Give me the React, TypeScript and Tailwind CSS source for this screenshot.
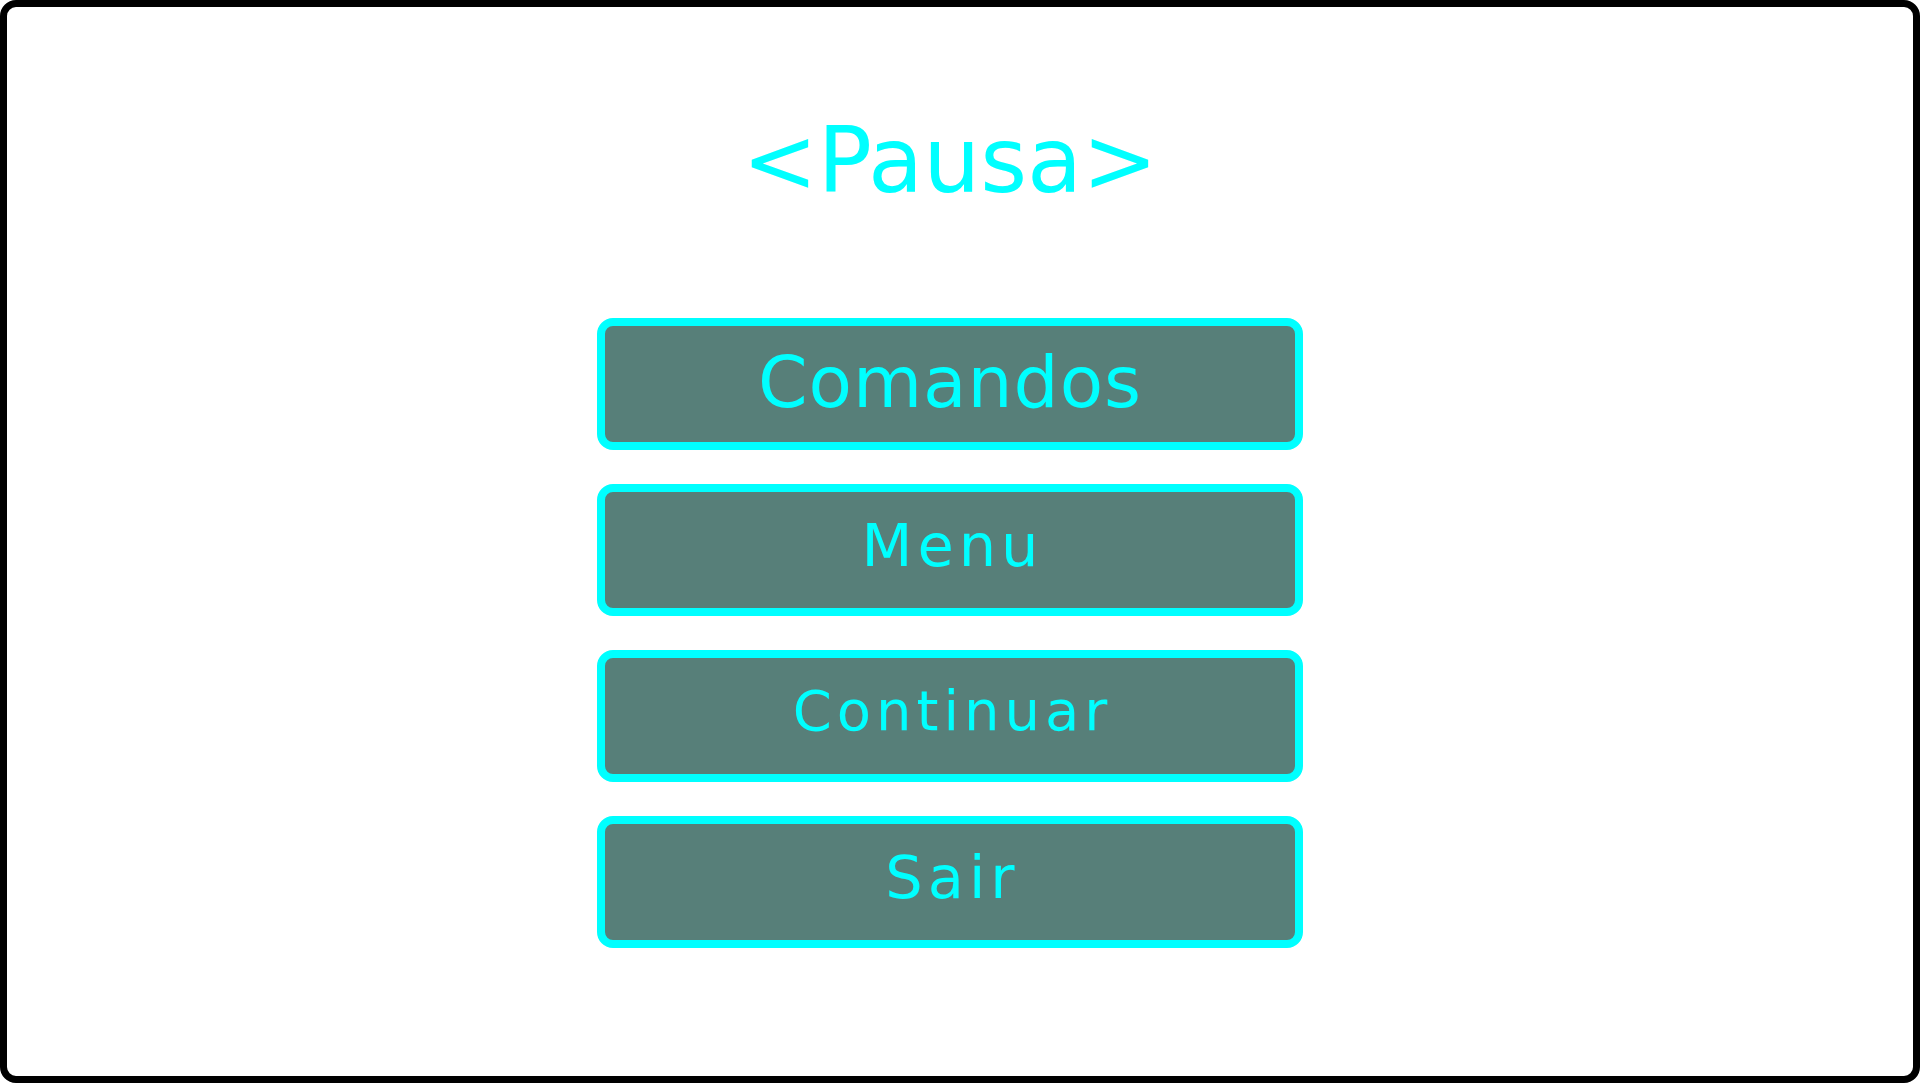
const buttons = [
  { label: "Comandos", cls: "text-[71px] tracking-[1px] pb-[4px]" },
  { label: "Menu", cls: "text-[59px] tracking-[5px] pb-[9px] pl-[5px]" },
  { label: "Continuar", cls: "text-[56px] tracking-[5px] pb-[11px] pl-[5px]" },
  { label: "Sair", cls: "text-[59px] tracking-[5px] pb-[10px] pl-[5px]" },
];

const PauseButton = ({ label, cls }: { label: string; cls: string }) => (
  <button
    className={`box-border flex h-[132px] w-[706px] shrink-0 cursor-pointer items-center justify-center rounded-[16px] border-[8px] border-[#00ffff] bg-[#577f79] leading-none text-[#00ffff] ${cls}`}
  >
    {label}
  </button>
);

const App = () => {
  return (
    <div
      className="box-border flex h-[1083px] w-full flex-col items-center rounded-[16px] border-[7px] border-black bg-white pr-[20px] pt-[109px]"
      style={{ fontFamily: '"DejaVu Sans", sans-serif' }}
    >
      <h1 className="shrink-0 text-[90px] leading-none text-[#00ffff]">&lt;Pausa&gt;</h1>

      <div className="mt-[112px] flex shrink-0 flex-col gap-[34px]">
        {buttons.map((b) => (
          <PauseButton key={b.label} label={b.label} cls={b.cls} />
        ))}
      </div>
    </div>
  );
};

export default App;
